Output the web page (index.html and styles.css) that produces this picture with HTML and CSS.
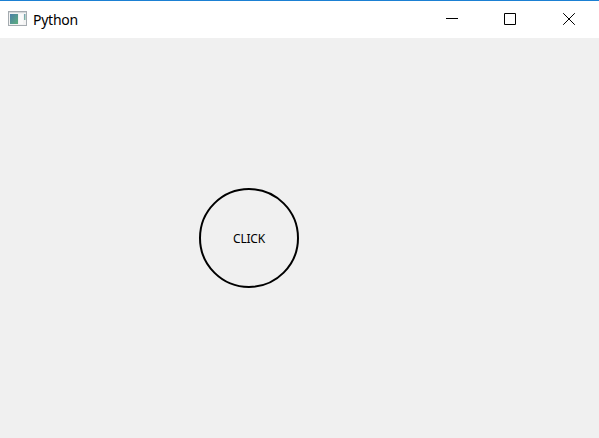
FILE: index.html
```html
<!DOCTYPE html>
<html lang="en">
<head>
<meta charset="utf-8">
<title>Python</title>
<link rel="stylesheet" href="styles.css">
</head>
<body>
<div class="window">
  <header class="titlebar">
    <svg class="app-icon" width="19" height="15" viewBox="0 0 19 15">
      <defs>
        <linearGradient id="pane" x1="0" y1="0" x2="1" y2="1">
          <stop offset="0" stop-color="#4a7fa8"/>
          <stop offset="1" stop-color="#5dae7c"/>
        </linearGradient>
      </defs>
      <rect x=".5" y=".5" width="18" height="14" fill="#f3f3f3" stroke="#a5abb0"/>
      <path d="M1 1.5h17" stroke="#d5d8da"/>
      <rect x="2" y="3" width="8" height="10" fill="url(#pane)"/>
      <rect x="11" y="3" width="4" height="10" fill="#fafafa"/>
      <rect x="16" y="3" width="1.5" height="6" fill="url(#pane)" opacity=".75"/>
    </svg>
    <span class="title">Python</span>
    <div class="controls">
      <svg class="control" width="12" height="12" viewBox="0 0 12 12"><path d="M0 5.5h12"/></svg>
      <svg class="control" width="12" height="12" viewBox="0 0 12 12"><path d="M.5 .5h11v11H.5z"/></svg>
      <svg class="control" width="12" height="12" viewBox="0 0 12 12"><path d="M.2 .2l11.6 11.6M11.8 .2L.2 11.8"/></svg>
    </div>
  </header>
  <main class="content">
    <button class="round-button"><span class="label">CLICK</span></button>
  </main>
</div>
</body>
</html>
```

FILE: styles.css
```css
* {
  box-sizing: border-box;
}

body {
  margin: 0;
  font-family: "Noto Sans", "Open Sans", sans-serif;
  color: #000;
}

.window {
  display: flex;
  flex-direction: column;
  width: 599px;
  height: 438px;
  background: #f0f0f0;
  overflow: hidden;
}

.titlebar {
  display: flex;
  align-items: flex-start;
  height: 38px;
  padding: 0 24px 0 8px;
  border-top: 1px solid #1b80d3;
  background: #fff;
}

.app-icon {
  margin-top: 10px;
}

.title {
  margin: 9px 0 0 6px;
  font-size: 14px;
  line-height: 20px;
  letter-spacing: -0.25px;
}

.controls {
  display: flex;
  margin: 12px 0 0 auto;
}

.control {
  display: block;
  margin-left: 47px;
  fill: none;
  stroke: #000;
  stroke-width: 1;
}

.control:nth-child(2) {
  margin-left: 46px;
}

.content {
  flex: 1;
  padding: 150px 0 0 199px;
}

.round-button {
  display: flex;
  align-items: center;
  justify-content: center;
  width: 100px;
  height: 100px;
  padding: 2px 0 0;
  border: 2px solid #000;
  border-radius: 50%;
  background: transparent;
  color: #000;
  font-family: inherit;
  font-size: 12px;
}

.label {
  line-height: 16px;
  letter-spacing: -0.2px;
}
```
